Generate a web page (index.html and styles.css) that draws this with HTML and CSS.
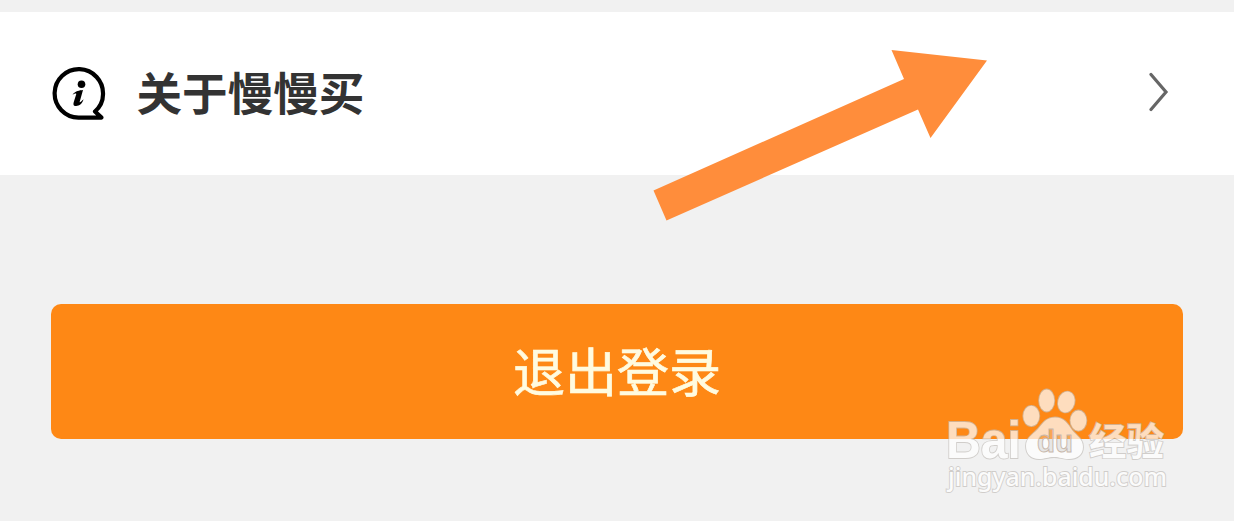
FILE: index.html
```html
<!DOCTYPE html>
<html lang="zh-CN">
<head>
<meta charset="utf-8">
<title>关于慢慢买</title>
<link rel="stylesheet" href="styles.css">
</head>
<body>
<main class="page">
  <a class="row">
    <svg class="row-icon" viewBox="0 0 54 54" aria-hidden="true">
      <path d="M43 44.500C48 40 51 34 51 27.500A24.200 24.200 0 1 0 26.500 50.600H49.500Z" fill="none" stroke="#000" stroke-width="4.200" stroke-linejoin="round"/>
      <circle cx="29.500" cy="17.200" r="3.800"/>
      <path d="M20.500 27.500C24 24 27 23.300 31 23L27.700 34.700C27.500 35.800 28.500 35.500 31.500 32.300C30.500 36.800 27 39.300 23.600 39C21 38.800 21.200 36.800 22 34.200L24.300 27C24.500 26 23 26.300 20.500 27.500Z"/>
    </svg>
    <span class="row-label">关于慢慢买</span>
    <svg class="chevron" viewBox="0 0 20 40" aria-hidden="true"><path d="M2 2.500 17 20 2 37.500"/></svg>
  </a>
  <button class="logout">退出登录</button>
  <svg class="arrow" viewBox="0 0 336 172" aria-hidden="true">
    <path d="M1.500 140.500 252 29 239.500 0 335 10.500 278.500 88 266 59.500 14.500 170.500Z"/>
  </svg>
  <svg class="watermark" viewBox="0 0 230 110">
    <defs>
      <linearGradient id="du-fill" gradientUnits="userSpaceOnUse" x1="0" y1="0" x2="0" y2="108">
        <stop offset="0.500" stop-color="#f9a552"/>
        <stop offset="0.500" stop-color="#e6e6e6"/>
      </linearGradient>
    </defs>
    <g class="mark">
      <text class="bai" x="6" y="72.500" textLength="75" lengthAdjust="spacingAndGlyphs">Bai</text>
      <ellipse cx="91.300" cy="31" rx="8" ry="10.200"/>
      <ellipse cx="106.700" cy="15.500" rx="7.600" ry="11"/>
      <ellipse cx="126.300" cy="17" rx="8.200" ry="10.500" transform="rotate(15 126.300 17)"/>
      <ellipse cx="138.400" cy="35.600" rx="8" ry="10.200"/>
      <path d="M115 32.500C124 32.500 128 39 132 45C137 51 143 54 143 62C143 70 137 74 129 74C122 74 120 72 114 72C108 72 105 74 99 74C91 74 86 69 86 61C86 53 92 50 98 44C103 38 106 32.500 115 32.500Z"/>
      <text class="jingyan" x="149" y="69.500" textLength="75" lengthAdjust="spacingAndGlyphs">经验</text>
      <text class="domain" x="8" y="101" textLength="219" lengthAdjust="spacingAndGlyphs">jingyan.baidu.com</text>
    </g>
    <text class="du" x="97" y="67" textLength="36" lengthAdjust="spacingAndGlyphs" fill="url(#du-fill)">du</text>
  </svg>
</main>
</body>
</html>
```
FILE: styles.css
```css
body {
  margin: 0;
  background: #f1f1f1;
  font-family: "Noto Sans CJK SC", sans-serif;
}
.page {
  position: relative;
  box-sizing: border-box;
  height: 521px;
  padding-top: 12px;
  overflow: hidden;
}
.row {
  display: flex;
  align-items: center;
  box-sizing: border-box;
  height: 163px;
  padding: 0 65px 0 51.5px;
  background: #fff;
}
.row-icon {
  width: 54px;
  height: 54px;
}
.row-label {
  flex: 1;
  margin: 0 0 5px 31px;
  color: #333;
  font-size: 45.6px;
  font-weight: 700;
  line-height: 64px;
}
.chevron {
  width: 20px;
  height: 40px;
  margin-bottom: 3px;
}
.chevron path {
  fill: none;
  stroke: #666;
  stroke-width: 3.2;
  stroke-linecap: round;
}
.logout {
  display: block;
  width: 1132px;
  height: 135px;
  margin: 129px auto 0;
  padding: 0 0 4px;
  border: 0;
  border-radius: 10px;
  background: #fe8815;
  color: #fffbe0;
  font: 400 52px/76px "Noto Sans CJK SC", sans-serif;
  -webkit-text-stroke: 0.7px #fffbe0;
}
.arrow {
  position: absolute;
  top: 50px;
  left: 652px;
  width: 336px;
  height: 172px;
  fill: #ff8d3b;
}
.watermark {
  position: absolute;
  top: 385px;
  left: 940px;
  width: 230px;
  height: 110px;
}
.mark {
  fill: #fff;
  stroke: #c4c0bc;
  stroke-width: 1.8;
  paint-order: stroke;
  opacity: 0.72;
}
.bai {
  font: 700 52px "Liberation Sans", sans-serif;
}
.jingyan {
  font: 700 38px "Noto Sans CJK SC", sans-serif;
}
.domain {
  font: 500 25px "Noto Sans", sans-serif;
}
.du {
  stroke: #c9b9ad;
  stroke-width: 1;
  font: 700 31px "Liberation Sans", sans-serif;
}
```
